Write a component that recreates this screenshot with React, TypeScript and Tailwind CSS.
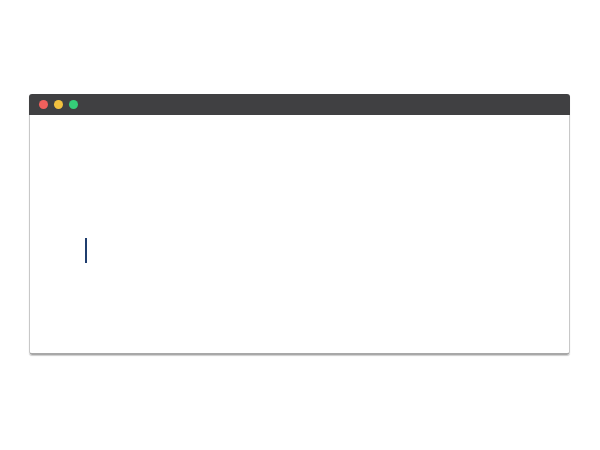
export default function App() {
  return (
    <div className="w-[600px] h-[450px] bg-white pt-[94px] pl-[29px]">
      {/* Window */}
      <div className="w-[541px] rounded-[3px] overflow-hidden shadow-[0_1px_1px_rgba(0,0,0,0.2)]">
        {/* Title bar */}
        <div className="h-[21px] bg-[#404042] flex items-center gap-[6px] pl-[10px]">
          <span className="w-[9px] h-[9px] rounded-full bg-[#f0605d]" />
          <span className="w-[9px] h-[9px] rounded-full bg-[#f2c13f]" />
          <span className="w-[9px] h-[9px] rounded-full bg-[#35cd79]" />
        </div>
        {/* Editor body */}
        <div className="h-[240px] bg-white border-x border-b-2 border-x-[#c8c8c8] border-b-[#a8a8a8] rounded-b-[3px] pt-[123px] pl-[55px]">
          <div className="w-[2px] h-[25px] bg-[#1f3d6e]" />
        </div>
      </div>
    </div>
  )
}
